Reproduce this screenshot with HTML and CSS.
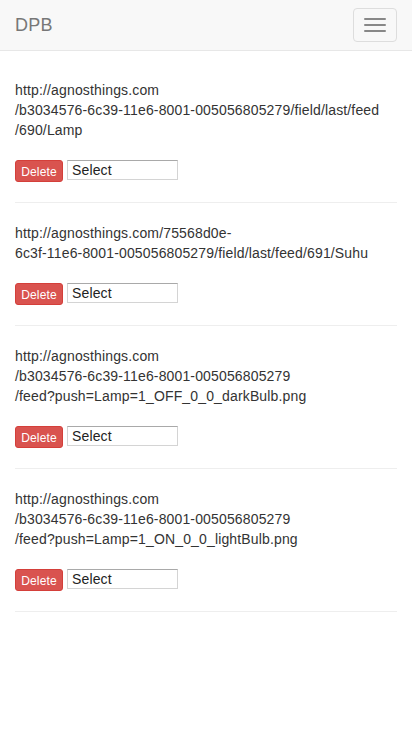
FILE: index.html
```html
<!DOCTYPE html>
<html>
<head>
<meta charset="utf-8">
<link rel="stylesheet" href="styles.css">
</head>
<body>
<nav class="navbar">
  <a class="brand">DPB</a>
  <button class="toggle"><span class="bar"></span><span class="bar"></span><span class="bar"></span></button>
</nav>
<main class="container">
  <section class="item">
    <p class="url">http://agnosthings.com<br>/b3034576-6c39-11e6-8001-005056805279/field/last/feed<br>/690/Lamp</p>
    <div class="actions"><button class="btn-delete">Delete</button><span class="select">Select</span></div>
  </section>
  <section class="item">
    <p class="url">http://agnosthings.com/75568d0e-<br>6c3f-11e6-8001-005056805279/field/last/feed/691/Suhu</p>
    <div class="actions"><button class="btn-delete">Delete</button><span class="select">Select</span></div>
  </section>
  <section class="item">
    <p class="url">http://agnosthings.com<br>/b3034576-6c39-11e6-8001-005056805279<br>/feed?push=Lamp=1_OFF_0_0_darkBulb.png</p>
    <div class="actions"><button class="btn-delete">Delete</button><span class="select">Select</span></div>
  </section>
  <section class="item">
    <p class="url">http://agnosthings.com<br>/b3034576-6c39-11e6-8001-005056805279<br>/feed?push=Lamp=1_ON_0_0_lightBulb.png</p>
    <div class="actions"><button class="btn-delete">Delete</button><span class="select">Select</span></div>
  </section>
</main>
</body>
</html>
```
FILE: styles.css
```css
* { box-sizing: border-box; }
html, body { margin: 0; padding: 0; }
body {
  font-family: "Liberation Sans", Arial, sans-serif;
  font-size: 14px;
  line-height: 20px;
  color: #333;
  background: #fff;
}
.navbar {
  height: 51px;
  background: #f8f8f8;
  border-bottom: 1px solid #e7e7e7;
  display: flex;
  align-items: center;
  justify-content: space-between;
  padding: 0 15px;
}
.brand {
  font-size: 18px;
  line-height: 20px;
  color: #777;
  margin-top: -1px;
  letter-spacing: 0.2px;
}
.toggle {
  width: 44px;
  height: 34px;
  border: 1px solid #ddd;
  border-radius: 4px;
  background: transparent;
  padding: 0;
  display: flex;
  flex-direction: column;
  align-items: center;
  justify-content: center;
  gap: 4px;
  margin-top: -1px;
}
.bar {
  display: block;
  width: 22px;
  height: 2px;
  border-radius: 1px;
  background: #888;
}
.container {
  padding: 29px 15px 0;
}
.item {
  border-bottom: 1px solid #eee;
  padding-bottom: 20px;
  margin-bottom: 20px;
}
.url {
  margin: 0 0 20px;
  letter-spacing: 0.15px;
}
.actions {
  display: flex;
  align-items: flex-start;
  gap: 4px;
}
.btn-delete {
  font-family: "Liberation Sans", Arial, sans-serif;
  font-size: 12px;
  line-height: 18px;
  height: 22px;
  width: 48px;
  padding: 2px 5px 0;
  color: #fff;
  background: #d9534f;
  border: 1px solid #d43f3a;
  border-radius: 3px;
  letter-spacing: 0.15px;
}
.select {
  display: block;
  width: 111px;
  height: 20px;
  border: 1px solid #d4d4d4;
  border-top-color: #a9a9a9;
  padding: 1px 4px 0;
  font-size: 14px;
  line-height: 17px;
  color: #222;
  letter-spacing: 0.15px;
}
```
